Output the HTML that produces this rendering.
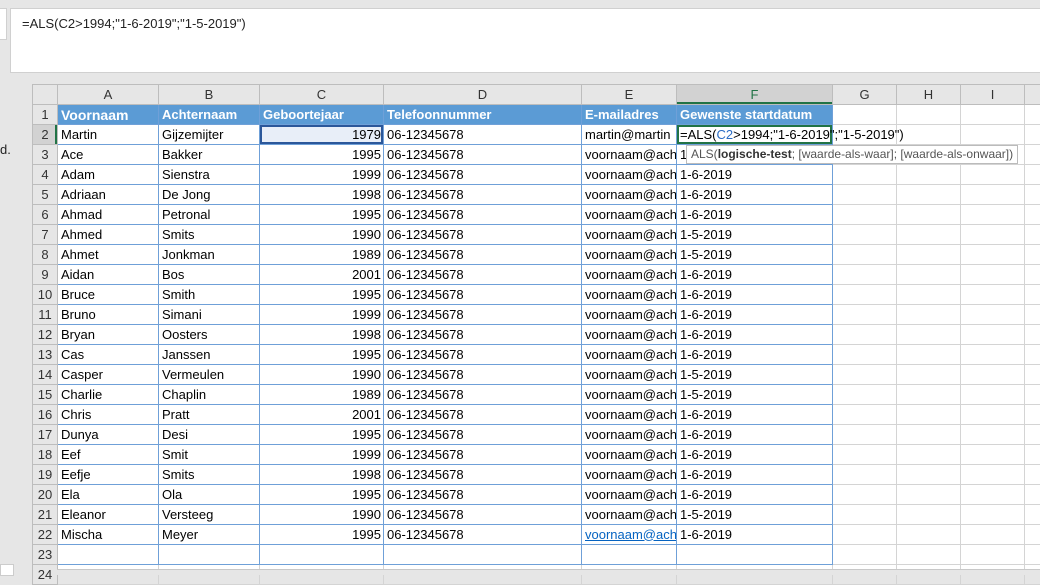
<!DOCTYPE html>
<html><head><meta charset="utf-8"><style>
body{margin:0;width:1040px;height:574px;overflow:hidden;background:#e6e6e6;font-family:"Liberation Sans",sans-serif;position:relative}
.fx{position:absolute;left:10px;top:8px;width:1040px;height:65px;background:#fff;border:1px solid #d0d0d0;box-sizing:border-box}
.fx span{position:absolute;left:11px;top:7px;font-size:13px;color:#222}
.lb{position:absolute;left:0;top:8px;width:6px;height:30px;background:#fff;border:1px solid #d0d0d0;border-left:0}
.d{position:absolute;left:0;top:142px;font-size:13px;color:#222}
.grid{position:absolute;left:32px;top:84px;width:1008px;height:490px;background:#fff}
table{border-collapse:collapse;table-layout:fixed;position:absolute;left:32px;top:84px;width:1008px}
td{height:20px;box-sizing:border-box;padding:0 0 0 3px;border:1px solid #d4d4d4;font-size:13px;color:#000;white-space:nowrap;overflow:hidden;line-height:18px}
tr.h td{background:#e6e6e6;text-align:center;color:#333;border-color:#bdbdbd;padding:0}
td.rh{background:#e6e6e6;text-align:center;color:#333;border-color:#bdbdbd;padding:0;font-size:13px}
td.b{border:1px solid #6fa0d8}
tr.t1 td.b{background:#5b9bd5;color:#fff;font-weight:bold}
td.r{text-align:right;padding:0 2px 0 0}
.tip{position:absolute;left:686px;top:145px;height:17px;padding:0 4px;background:#fff;border:1px solid #bbb;font-size:12px;color:#555;line-height:17px;white-space:nowrap}
</style></head><body>
<div class="lb"></div>
<div class="fx"><span>=ALS(C2&gt;1994;"1-6-2019";"1-5-2019")</span></div>
<div class="d">d.</div>
<div class="grid"></div>
<table>
<colgroup><col style="width:25px"><col style="width:101px"><col style="width:101px"><col style="width:124px"><col style="width:198px"><col style="width:95px"><col style="width:156px"><col style="width:64px"><col style="width:64px"><col style="width:64px"><col style="width:16px"></colgroup>
<tr class="h"><td></td><td>A</td><td>B</td><td>C</td><td>D</td><td>E</td><td style="background:#d2d2d2;box-shadow:inset 0 -2px 0 #217346;color:#217346">F</td><td>G</td><td>H</td><td>I</td><td></td></tr>
<tr class="t1"><td class="rh">1</td><td class="b" style="font-size:14px">Voornaam</td><td class="b">Achternaam</td><td class="b">Geboortejaar</td><td class="b">Telefoonnummer</td><td class="b">E-mailadres</td><td class="b">Gewenste startdatum</td><td></td><td></td><td></td><td></td></tr>
<tr><td class="rh" style="background:#d2d2d2;box-shadow:inset -2px 0 0 #217346">2</td><td class="b">Martin</td><td class="b">Gijzemijter</td><td class="b r" style="background:#e8eef8;box-shadow:inset 0 0 0 2px #2b579a">1979</td><td class="b">06-12345678</td><td class="b">martin@martin</td><td class="b" style="box-shadow:inset 0 0 0 2px #217346;overflow:visible">=ALS(<span style="color:#2b6cc4">C2</span>&gt;1994;"1-6-2019";"1-5-2019")</td><td></td><td></td><td></td><td></td></tr>
<tr><td class="rh">3</td><td class="b">Ace</td><td class="b">Bakker</td><td class="b r">1995</td><td class="b">06-12345678</td><td class="b">voornaam@ach</td><td class="b">1</td><td></td><td></td><td></td><td></td></tr>
<tr><td class="rh">4</td><td class="b">Adam</td><td class="b">Sienstra</td><td class="b r">1999</td><td class="b">06-12345678</td><td class="b">voornaam@ach</td><td class="b">1-6-2019</td><td></td><td></td><td></td><td></td></tr>
<tr><td class="rh">5</td><td class="b">Adriaan</td><td class="b">De Jong</td><td class="b r">1998</td><td class="b">06-12345678</td><td class="b">voornaam@ach</td><td class="b">1-6-2019</td><td></td><td></td><td></td><td></td></tr>
<tr><td class="rh">6</td><td class="b">Ahmad</td><td class="b">Petronal</td><td class="b r">1995</td><td class="b">06-12345678</td><td class="b">voornaam@ach</td><td class="b">1-6-2019</td><td></td><td></td><td></td><td></td></tr>
<tr><td class="rh">7</td><td class="b">Ahmed</td><td class="b">Smits</td><td class="b r">1990</td><td class="b">06-12345678</td><td class="b">voornaam@ach</td><td class="b">1-5-2019</td><td></td><td></td><td></td><td></td></tr>
<tr><td class="rh">8</td><td class="b">Ahmet</td><td class="b">Jonkman</td><td class="b r">1989</td><td class="b">06-12345678</td><td class="b">voornaam@ach</td><td class="b">1-5-2019</td><td></td><td></td><td></td><td></td></tr>
<tr><td class="rh">9</td><td class="b">Aidan</td><td class="b">Bos</td><td class="b r">2001</td><td class="b">06-12345678</td><td class="b">voornaam@ach</td><td class="b">1-6-2019</td><td></td><td></td><td></td><td></td></tr>
<tr><td class="rh">10</td><td class="b">Bruce</td><td class="b">Smith</td><td class="b r">1995</td><td class="b">06-12345678</td><td class="b">voornaam@ach</td><td class="b">1-6-2019</td><td></td><td></td><td></td><td></td></tr>
<tr><td class="rh">11</td><td class="b">Bruno</td><td class="b">Simani</td><td class="b r">1999</td><td class="b">06-12345678</td><td class="b">voornaam@ach</td><td class="b">1-6-2019</td><td></td><td></td><td></td><td></td></tr>
<tr><td class="rh">12</td><td class="b">Bryan</td><td class="b">Oosters</td><td class="b r">1998</td><td class="b">06-12345678</td><td class="b">voornaam@ach</td><td class="b">1-6-2019</td><td></td><td></td><td></td><td></td></tr>
<tr><td class="rh">13</td><td class="b">Cas</td><td class="b">Janssen</td><td class="b r">1995</td><td class="b">06-12345678</td><td class="b">voornaam@ach</td><td class="b">1-6-2019</td><td></td><td></td><td></td><td></td></tr>
<tr><td class="rh">14</td><td class="b">Casper</td><td class="b">Vermeulen</td><td class="b r">1990</td><td class="b">06-12345678</td><td class="b">voornaam@ach</td><td class="b">1-5-2019</td><td></td><td></td><td></td><td></td></tr>
<tr><td class="rh">15</td><td class="b">Charlie</td><td class="b">Chaplin</td><td class="b r">1989</td><td class="b">06-12345678</td><td class="b">voornaam@ach</td><td class="b">1-5-2019</td><td></td><td></td><td></td><td></td></tr>
<tr><td class="rh">16</td><td class="b">Chris</td><td class="b">Pratt</td><td class="b r">2001</td><td class="b">06-12345678</td><td class="b">voornaam@ach</td><td class="b">1-6-2019</td><td></td><td></td><td></td><td></td></tr>
<tr><td class="rh">17</td><td class="b">Dunya</td><td class="b">Desi</td><td class="b r">1995</td><td class="b">06-12345678</td><td class="b">voornaam@ach</td><td class="b">1-6-2019</td><td></td><td></td><td></td><td></td></tr>
<tr><td class="rh">18</td><td class="b">Eef</td><td class="b">Smit</td><td class="b r">1999</td><td class="b">06-12345678</td><td class="b">voornaam@ach</td><td class="b">1-6-2019</td><td></td><td></td><td></td><td></td></tr>
<tr><td class="rh">19</td><td class="b">Eefje</td><td class="b">Smits</td><td class="b r">1998</td><td class="b">06-12345678</td><td class="b">voornaam@ach</td><td class="b">1-6-2019</td><td></td><td></td><td></td><td></td></tr>
<tr><td class="rh">20</td><td class="b">Ela</td><td class="b">Ola</td><td class="b r">1995</td><td class="b">06-12345678</td><td class="b">voornaam@ach</td><td class="b">1-6-2019</td><td></td><td></td><td></td><td></td></tr>
<tr><td class="rh">21</td><td class="b">Eleanor</td><td class="b">Versteeg</td><td class="b r">1990</td><td class="b">06-12345678</td><td class="b">voornaam@ach</td><td class="b">1-5-2019</td><td></td><td></td><td></td><td></td></tr>
<tr><td class="rh">22</td><td class="b">Mischa</td><td class="b">Meyer</td><td class="b r">1995</td><td class="b">06-12345678</td><td class="b" style="color:#0563c1;text-decoration:underline">voornaam@ach</td><td class="b">1-6-2019</td><td></td><td></td><td></td><td></td></tr>
<tr><td class="rh">23</td><td class="b"></td><td class="b"></td><td class="b"></td><td class="b"></td><td class="b"></td><td class="b"></td><td></td><td></td><td></td><td></td></tr>
<tr><td class="rh">24</td><td></td><td></td><td></td><td></td><td></td><td></td><td></td><td></td><td></td><td></td></tr>
</table>
<div class="tip">ALS(<b style="color:#333">logische-test</b>; [waarde-als-waar]; [waarde-als-onwaar])</div>
<div style="position:absolute;left:57px;top:569px;width:983px;height:5px;background:#e6e6e6;border-top:1px solid #c8c8c8"></div>
<div style="position:absolute;left:0;top:564px;width:12px;height:10px;background:#fff;border:1px solid #ccc"></div>
</body></html>
